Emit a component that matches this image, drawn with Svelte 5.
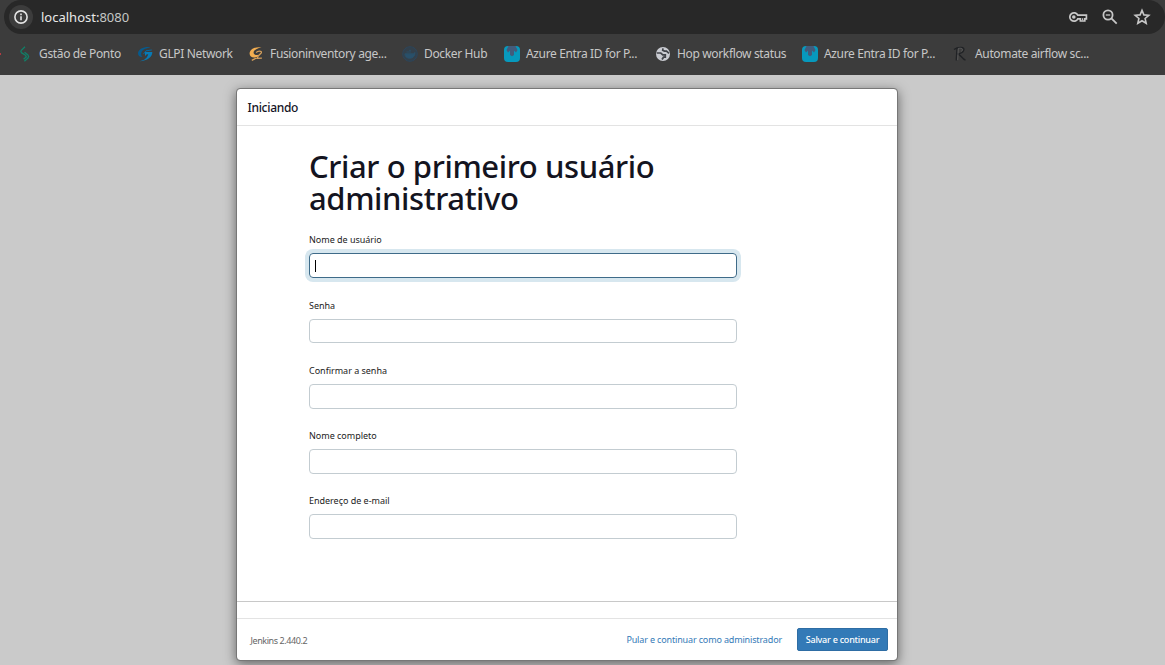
<script>
  const bookmarks = [
    { icon: 'ponto', text: 'Gstão de Ponto', w: 82 },
    { icon: 'glpi', text: 'GLPI Network', w: 73 },
    { icon: 'fusion', text: 'Fusioninventory age...', w: 116 },
    { icon: 'docker', text: 'Docker Hub', w: 64 },
    { icon: 'azure', text: 'Azure Entra ID for P...', w: 113 },
    { icon: 'globe', text: 'Hop workflow status', w: 109 },
    { icon: 'azure', text: 'Azure Entra ID for P...', w: 113 },
    { icon: 'script', text: 'Automate airflow sc...', w: 115 }
  ];
  const fields = ['Nome de usuário', 'Senha', 'Confirmar a senha', 'Nome completo', 'Endereço de e-mail'];
</script>

<div class="window">
  <div class="chrome">
    <div class="address">
      <span class="info">
        <svg width="16" height="16" viewBox="0 0 16 16" fill="none" stroke="#e3e3e3" stroke-width="1.6"><circle cx="8" cy="8" r="6.1" /><path d="M8 7.2v4M8 4.6v1.6" /></svg>
      </span>
      <span class="url">localhost:<i>8080</i></span>
      <div class="actions">
        <svg width="20" height="14" viewBox="0 0 20 14" fill="none" stroke="#c7c7c7" stroke-width="1.7"><path d="M9.800 5.200A4.200 4.200 0 1 0 9.800 8.800H12.400V11H16.800V8.800H18.400V5.200Z" /><circle cx="5.8" cy="7" r="1.8" fill="#c7c7c7" stroke="none" /><path d="M14.600 8.200v2" stroke-width="1.200" /></svg>
        <svg class="lens" width="16" height="16" viewBox="0 0 16 16" fill="none" stroke="#c7c7c7" stroke-width="1.8"><circle cx="6" cy="6" r="4.6" /><path d="m9.400 9.400 5.300 5.300" /><path d="M3.800 6h4.400" stroke-width="1.300" /></svg>
        <svg width="18" height="18" viewBox="0 0 18 18" fill="none" stroke="#c7c7c7" stroke-width="1.6"><path d="m9 2.400 1.900 4.500 4.900.4-3.700 3.200 1.100 4.800L9 12.700l-4.200 2.600 1.100-4.800-3.700-3.200 4.900-.4z" /></svg>
      </div>
    </div>
    <nav class="bookmarks">
      <span class="edge"></span>
      {#each bookmarks as b}
        <span class="bookmark">
          <svg class="icon" width="16" height="16" viewBox="0 0 16 16">
            {#if b.icon === 'ponto'}
              <path d="M8 .8 4.300 4.300Q3.300 5.800 4.700 6.900L8.500 9.300M7.500 6.200l3.400 2.700Q12.300 10.300 11 12L7.400 15.300M8.500 9.300 9.300 10.800 6.600 13.300" fill="none" stroke="#108068" stroke-width="1.300" />
            {:else if b.icon === 'glpi'}
              <path d="M13.500 1.200C8 .2 1.500 2.500 1 7c-.2 3 2 4.200 4.500 4C3.500 9.500 3.300 4.500 8.500 2.700Z" fill="#075a8c" /><path d="M8 6h7.300c.2 5-5 8.800-12.800 9.200 5-.8 7.700-3.300 8.800-7H9.800L8 10Z" fill="#087ab5" /><path d="M14.800 4 9 4.800 6.500 8" fill="none" stroke="#0769a0" />
            {:else if b.icon === 'fusion'}
              <g transform="translate(1 0)"><path d="M12.500 1.300C7 .5 1 2.600.6 7.300c-.2 3.800 4 5.200 7.800 3.400l1.200-2C6.800 9.400 4.400 8.700 4.600 6.300 4.700 4 8 2.700 12.500 1.300Z" fill="#f3ae51" /><path d="M7.200 6.600c1.500-2 5.800-2 5.100.2C11.800 8.200 8.600 9 8.300 12.300l4.600-.2M7.500 12 2.800 14.300" fill="none" stroke="#d7a05c" stroke-width="1.300" /></g>
            {:else if b.icon === 'docker'}
              <circle cx="8" cy="8" r="7.300" fill="#33404b" stroke="#2c465c" /><path d="M2.800 7.800h8.500l1.800-1.300c-.1 3.600-2.300 5.800-5.600 5.800-2.900 0-4.500-1.800-4.700-4.500ZM4.500 6h4.500M7 4.300h2" fill="#29506a" stroke="#29506a" stroke-width=".8" />
            {:else if b.icon === 'azure'}
              <rect width="16" height="16" rx="4" fill="#0799bd" /><path d="M4.500 0h7l2 4-1.500 2.500-2-2V9L8 10.200 6 9V4.500l-2 2L2.500 4Z" fill="#435b7b" />
            {:else if b.icon === 'globe'}
              <circle cx="8" cy="8" r="7" fill="#c9cbd1" /><path d="M1.800 7h4l2 1.800h2.500v2.400H8.500L7 13.500M8 2.300l-.3 2 1.800.8h2l2.500 2.200" fill="none" stroke="#41444a" stroke-width="1.700" />
            {:else}
              <path d="m4 2-.8 12.500M1 3.500C5 .5 12.500.5 10.700 4.500 9.800 6.700 6.500 7.700 4.500 8c3 0 4.300 4.800 8 6.200" fill="none" stroke="#202225" stroke-width="1.300" /><path d="m5.300 3-.6 11M5 2.500c4-1 5.500.5 3.500 3" fill="none" stroke="#656565" stroke-width=".7" />
            {/if}
          </svg>
          <span class="name" style:width="{b.w}px">{b.text}</span>
        </span>
      {/each}
    </nav>
  </div>

  <main class="page">
    <section class="dialog">
      <header>Iniciando</header>
      <form>
        <h1>Criar o primeiro usuário<br />administrativo</h1>
        {#each fields as f, i}
          <div class="field">
            <label for="f{i}">{f}</label>
            <div class="input" class:focused={i === 0} id="f{i}">{#if i === 0}<span class="caret"></span>{/if}</div>
          </div>
        {/each}
      </form>
      <div class="gap"></div>
      <footer>
        <span class="version">Jenkins 2.440.2</span>
        <span class="skip">Pular e continuar como administrador</span>
        <button type="button">Salvar e continuar</button>
      </footer>
    </section>
  </main>
</div>

<style>
  :global(body) { margin: 0; overflow: hidden; }
  * { box-sizing: border-box; }
  .window { width: 1165px; height: 665px; overflow: hidden; display: flex; flex-direction: column; font-family: "Noto Sans", "Open Sans", sans-serif; background: #cacaca; }
  .chrome { height: 75px; flex: none; background: #3c3c3c; }
  .address { height: 34px; margin-left: 4px; background: #282828; border-radius: 17px; display: flex; align-items: center; padding: 0 14px 0 5px; }
  .info { width: 24px; height: 24px; border-radius: 50%; background: #3c3c3c; display: grid; place-items: center; }
  .url { margin-left: 8px; font-size: 13px; letter-spacing: 0; color: #e8e8e8; white-space: nowrap; }
  .url i { font-style: normal; color: #c4c7c5; }
  .actions { margin-left: auto; display: flex; align-items: center; gap: 14px; }
  .lens { margin-right: 1px; }
  .bookmarks { height: 40px; display: flex; align-items: center; }
  .edge { width: 1px; height: 2px; background: #b33b43; margin-right: 16px; flex: none; }
  .bookmark { display: flex; align-items: center; margin-right: 16px; flex: none; }
  .icon { flex: none; margin-right: 6px; }
  .name { font-size: 12px; line-height: 16px; letter-spacing: -.35px; color: #c7c7c7; white-space: nowrap; }
  .page { flex: 1; padding: 13px 0 0 236px; }
  .dialog { width: 662px; height: 573px; border: 1px solid #777; border-radius: 4px; background: #fff; background-clip: padding-box; box-shadow: 0 3px 12px rgba(0, 0, 0, .5); display: flex; flex-direction: column; }
  header { height: 37px; flex: none; border-bottom: 1px solid #e3e3e3; padding-left: 10.5px; font-size: 12px; letter-spacing: -.3px; line-height: 37px; color: #14141f; font-weight: 500; }
  form { height: 475px; flex: none; padding: 24px 160px 0 72px; }
  h1 { margin: 0; height: 67px; font-size: 31px; letter-spacing: -.4px; line-height: 32px; font-weight: 500; color: #14141f; white-space: nowrap; }
  .field { height: 65.28px; padding-top: 16.4px; }
  label { display: block; height: 19.9px; line-height: 14px; font-size: 9px; letter-spacing: -.02px; color: #222; white-space: nowrap; }
  .input { width: 428px; height: 24.7px; border: 1px solid #c3ccd1; border-radius: 4px; display: flex; align-items: center; padding-left: 5px; }
  .focused { border-color: #3e6b89; box-shadow: 0 0 0 4px #d7e7ef; }
  .caret { width: 1px; height: 12px; background: #000; }
  .gap { height: 18px; flex: none; border-top: 1px solid #c8c8c8; border-bottom: 1px solid #e3e3e3; }
  footer { flex: 1; display: flex; align-items: center; padding: 0 9px 0 13px; font-size: 9px; white-space: nowrap; }
  .version { color: #666; letter-spacing: -.42px; padding: 2px 0 0 .5px; }
  .skip { margin-left: auto; margin-right: 15px; color: #337ab7; letter-spacing: -.15px; }
  button { width: 91px; height: 23px; padding: 0; background: #337ab7; border: 1px solid #2e6da4; border-radius: 2px; color: #fff; font: 500 9px "Noto Sans", sans-serif; letter-spacing: -.24px; }
</style>
